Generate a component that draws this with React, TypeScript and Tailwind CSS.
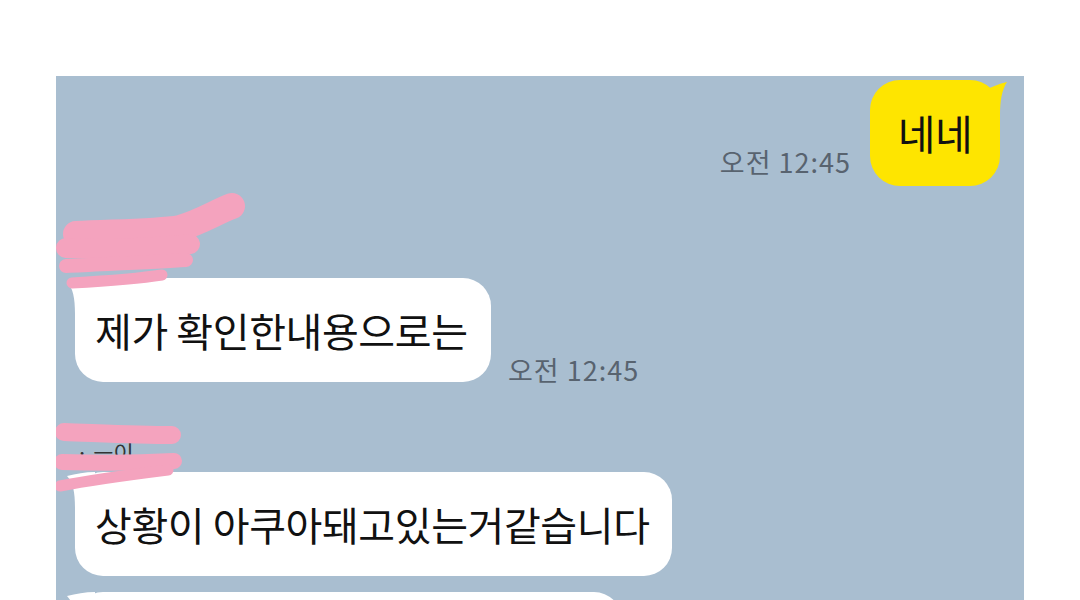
import React from 'react';

const TIME = '오전 12:45';

// little horn on the top-left of incoming bubbles
const LeftTail: React.FC = () => (
  <svg className="absolute left-[-10px] top-0" width="40" height="40" viewBox="0 0 40 40">
    <path d="M30 0 C20 0 11 2 2 4 C8 10 10 20 10 36 L30 36 Z" fill="#ffffff" />
  </svg>
);

// horn on the top-right of my (yellow) bubble
const RightTail: React.FC = () => (
  <svg className="absolute right-[-10px] top-0" width="40" height="40" viewBox="0 0 40 40">
    <path d="M10 12 C20 8 28 4 37 2 C32 10 30 20 30 36 L10 36 Z" fill="#fee500" />
  </svg>
);

const Time: React.FC<{ className?: string }> = ({ className }) => (
  <span className={`text-[27px] leading-[27px] tracking-[1px] text-[#58636f] whitespace-nowrap ${className ?? ''}`}>
    {TIME}
  </span>
);

const Bubble: React.FC<{ text?: string; className?: string }> = ({ text, className }) => (
  <div className={`relative h-[104px] flex items-center rounded-[28px] bg-white px-[20px] ${className ?? ''}`}>
    <LeftTail />
    {text && <span className="relative text-[40px] tracking-[-0.4px] text-[#111] whitespace-nowrap">{text}</span>}
  </div>
);

const App: React.FC = () => {
  return (
    <div className="h-[600px] w-[1080px] overflow-hidden bg-white font-['Noto_Sans_CJK_KR','Noto_Sans',sans-serif]">
      <div className="ml-[56px] mt-[76px] h-[524px] w-[968px] overflow-hidden bg-[#a9bed0]">
        {/* my message */}
        <div className="flex items-end justify-end gap-[19px] pr-[24px] pt-[4px]">
          <Time className="mb-[11px]" />
          <div className="relative flex h-[106px] w-[130px] items-center justify-center rounded-[30px] bg-[#fee500]">
            <RightTail />
            <span className="relative text-[41px] tracking-[-0.4px] text-[#111]">네네</span>
          </div>
        </div>

        {/* sender name, scribbled out */}
        <div className="relative h-[92px]">
          <svg className="absolute left-0 top-0 z-10" width="200" height="110" viewBox="0 0 200 110" fill="none" strokeLinecap="round" strokeLinejoin="round">
            <path d="M20 48 C60 46 100 46 124 42 C145 36 160 26 176 20" stroke="#f4a3be" strokeWidth="26" />
            <path d="M10 62 C50 64 100 62 134 58" stroke="#f4a3be" strokeWidth="20" />
            <path d="M10 80 C50 78 100 76 130 74" stroke="#f4a3be" strokeWidth="14" />
            <path d="M16 97 C50 95 80 93 106 89" stroke="#f4a3be" strokeWidth="11" />
          </svg>
        </div>

        <div className="flex items-end gap-[17px] pl-[19px]">
          <Bubble text="제가 확인한내용으로는" className="w-[416px]" />
          <Time className="mb-[-1px]" />
        </div>

        <div className="relative h-[90px]">
          <span className="absolute left-[20px] top-[58px] text-[22px] leading-[22px] text-[#333]">· ㅡ이</span>
          <svg className="absolute left-0 top-0 z-10" width="200" height="115" viewBox="0 0 200 115" fill="none" strokeLinecap="round">
            <path d="M8 50 C40 51 80 53 116 53" stroke="#f4a3be" strokeWidth="18" />
            <path d="M6 80 C40 81 80 81 118 79" stroke="#f4a3be" strokeWidth="16" />
            <path d="M4 104 C40 97 80 92 112 88" stroke="#f4a3be" strokeWidth="11" />
          </svg>
        </div>

        <div className="flex flex-col items-start gap-[16px] pl-[19px]">
          <Bubble text="상황이 아쿠아돼고있는거같습니다" className="w-[597px]" />
          <Bubble className="w-[547px]" />
        </div>
      </div>
    </div>
  );
};

export default App;
